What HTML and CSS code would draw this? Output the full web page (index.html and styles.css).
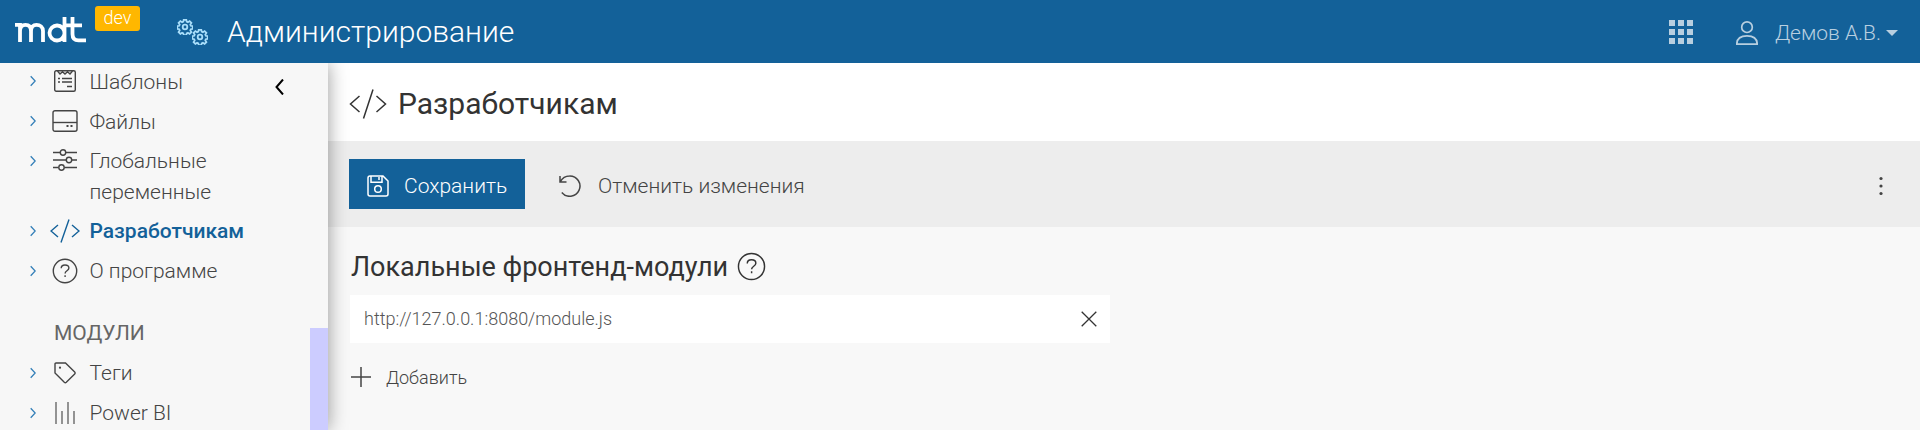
FILE: index.html
```html
<!DOCTYPE html>
<html lang="ru">
<head>
<meta charset="utf-8">
<title>Администрирование</title>
<link rel="stylesheet" href="styles.css">
</head>
<body>
<svg class="defs" width="0" height="0">
  <symbol id="chevron" viewBox="0 0 6 12"><path d="M.7 1.2 5.2 6 .7 10.8"/></symbol>
  <symbol id="code" viewBox="0 0 30 24"><path d="M8 6 1 12l7 6M22 6l7 6-7 6M19 .5 11 23.5"/></symbol>
  <symbol id="help" viewBox="0 0 26 26"><circle cx="13" cy="13" r="11.7"/><path d="M9.2 10.2C9.2 8 10.8 7 13 7s3.9 1.200 3.900 3.100c0 2.700-3.800 2.700-3.800 5.400M13.100 17.300v1.700"/></symbol>
  <symbol id="gear" viewBox="0 0 16 16"><path d="M6.700.8h2.600l.4 1.900 1.200.5 1.700-1.100 1.800 1.800-1.100 1.700.5 1.200 1.900.4v2.600l-1.900.4-.5 1.200 1.100 1.700-1.800 1.800-1.700-1.100-1.200.5-.4 1.900H6.700l-.4-1.900-1.200-.5-1.700 1.100-1.800-1.800 1.100-1.700-.5-1.200-1.900-.4V7.200l1.900-.4.5-1.200-1.100-1.700 1.800-1.800 1.700 1.100 1.200-.5z"/><circle cx="8" cy="8" r="2.300"/></symbol>
</svg>
<header class="topbar">
  <svg class="logo" viewBox="0 0 72 26" role="img" aria-label="mdt"><path d="M0 7.800H5V25M5 25V14c0-4 2-6.200 5.500-6.200S16 10 16 14v11M16 14c0-4 2-6.200 5.500-6.200S28 10 28 14v11M49.500 0v25M49.500 16.400a7.500 7.500 0 1 0-7.500 7.100 7.500 7.500 0 0 0 7.500-7.100M57.500 0v17c0 4.500 2.300 6.400 6 6.400H71M50 8.300h17"/></svg>
  <span class="badge">dev</span>
  <span class="gears"><svg class="gear gear-a"><use href="#gear"/></svg><svg class="gear gear-b"><use href="#gear"/></svg></span>
  <h1 class="app-title">Администрирование</h1>
  <svg class="apps" viewBox="0 0 24 24"><path d="M0 0h6v6H0zM9 0h6v6H9zM18 0h6v6h-6zM0 9h6v6H0zM9 9h6v6H9zM18 9h6v6h-6zM0 18h6v6H0zM9 18h6v6H9zM18 18h6v6h-6z"/></svg>
  <svg class="user" viewBox="0 0 22 24"><circle cx="11" cy="6.200" r="5.300"/><path d="M.8 23.200C.8 18 4.500 14.800 11 14.800S21.200 18 21.200 23.200z"/></svg>
  <span class="user-name">Демов А.В.</span>
  <svg class="caret" viewBox="0 0 12 6"><path d="M0 0h12L6 6z"/></svg>
</header>
<div class="layout">
  <nav class="sidebar">
    <svg class="collapse" viewBox="0 0 9 16"><path d="M8 .5 1.500 8 8 15.500"/></svg>
    <div class="item upper"><svg class="chev"><use href="#chevron"/></svg><span class="ico"><svg width="22" height="22" viewBox="0 0 22 22"><rect x=".7" y=".7" width="20.600" height="20.600" rx="1.500"/><path d="m3.500 1 2.500 3 2.500-2.300L11 4l2.500-2.300L16 4l2.500-3M4 8.500h2M8 8.500h10M4 12h2M8 12h10M13 16.500h5"/></svg></span><span class="label">Шаблоны</span></div>
    <div class="item upper"><svg class="chev"><use href="#chevron"/></svg><span class="ico"><svg width="26" height="22" viewBox="0 0 26 22"><rect x="1" y=".7" width="24" height="20.600" rx="2"/><path d="M1 12.500h24"/><path class="thick" d="M14.500 16h2M18.500 16h2"/></svg></span><span class="label">Файлы</span></div>
    <div class="item two-line"><svg class="chev"><use href="#chevron"/></svg><span class="ico"><svg width="24" height="22" viewBox="0 0 24 22"><path d="M0 3.500h7M13 3.500h11M0 11h13M19 11h5M0 18.500h5.500M11.500 18.500H24"/><circle cx="10" cy="3.500" r="2.700"/><circle cx="16" cy="11" r="2.700"/><circle cx="8.500" cy="18.500" r="2.700"/></svg></span><span class="label">Глобальные<br>переменные</span></div>
    <div class="item active"><svg class="chev"><use href="#chevron"/></svg><span class="ico"><svg width="30" height="24"><use href="#code"/></svg></span><span class="label">Разработчикам</span></div>
    <div class="item"><svg class="chev"><use href="#chevron"/></svg><span class="ico"><svg width="26" height="26"><use href="#help"/></svg></span><span class="label">О программе</span></div>
    <div class="group">МОДУЛИ</div>
    <div class="item"><svg class="chev"><use href="#chevron"/></svg><span class="ico"><svg width="22" height="22" viewBox="0 0 22 22"><path d="M1 2v9l9.300 9.300a1.500 1.500 0 0 0 2 0l8.400-8.400a1.400 1.400 0 0 0 0-2L11.500 1H2a1 1 0 0 0-1 1z"/><circle class="dot" cx="6" cy="5.700" r="1.100"/></svg></span><span class="label">Теги</span></div>
    <div class="item"><svg class="chev"><use href="#chevron"/></svg><span class="ico"><svg class="bars" width="22" height="22" viewBox="0 0 22 22"><path d="M2 0v22M8 9v13M14 0v22M20 9v13"/></svg></span><span class="label">Power BI</span></div>
    <div class="scroll-thumb"></div>
  </nav>
  <main class="main">
    <div class="page-head"><svg class="head-code" viewBox="0 0 38 30"><path d="M10.500 7 1.500 15l9 8M27.500 7l9 8-9 8M24 .5 14.500 29.500"/></svg><h2 class="page-title">Разработчикам</h2></div>
    <div class="toolbar">
      <button class="save"><svg width="22" height="22" viewBox="0 0 22 22"><path d="M3 1h13l5 5v13a2 2 0 0 1-2 2H3a2 2 0 0 1-2-2V3a2 2 0 0 1 2-2zM4 1v6.300h11V1M12 2v3"/><circle cx="11" cy="14" r="3.300"/></svg><span class="save-text">Сохранить</span></button>
      <button class="undo"><svg width="22" height="22" viewBox="0 0 22 22"><path d="M1 1v6h6.500M1.300 6.700C3.200 3.200 6.500.9 10.500.9a10.200 10.200 0 1 1-7.700 16.600"/></svg><span class="undo-text">Отменить изменения</span></button>
      <svg class="more" viewBox="0 0 4 20"><circle cx="2" cy="2.500" r="1.600"/><circle cx="2" cy="10" r="1.600"/><circle cx="2" cy="17.500" r="1.600"/></svg>
    </div>
    <section class="content">
      <div class="section-head"><h3 class="section-title">Локальные фронтенд-модули</h3><svg class="help" viewBox="0 0 26 26"><use href="#help"/></svg></div>
      <div class="field"><span class="url">http://127.0.0.1:8080/module.js</span><svg class="clear" viewBox="0 0 16 16"><path d="m.7.7 14.600 14.600M15.300.7.7 15.300"/></svg></div>
      <div class="add"><svg width="20" height="20" viewBox="0 0 20 20"><path d="M10 0v20M0 10h20"/></svg><span class="add-text">Добавить</span></div>
    </section>
  </main>
</div>
</body>
</html>
```
FILE: styles.css
```css
* { box-sizing: border-box; }
body { margin: 0; width: 1920px; height: 430px; overflow: hidden; font-family: Roboto, "Noto Sans", sans-serif; font-weight: 300; color: #333; background: #f8f8f8; }
svg { display: block; flex: none; fill: none; stroke: currentColor; }
.defs { position: absolute; }
h1, h2, h3 { margin: 0; white-space: nowrap; }
.topbar { display: flex; align-items: center; height: 63px; padding: 0 22px 0 15px; background: #136199; color: #fff; }
.logo { width: 72px; height: 26px; margin-bottom: 4px; stroke-width: 3.800; }
.badge { align-self: flex-start; width: 45px; height: 25px; margin: 6px 0 0 8px; border-radius: 3px; background: #ffb700; font-size: 18px; line-height: 23px; text-align: center; }
.gears { display: flex; width: 32px; height: 26px; margin: 1px 0 0 37px; color: #a9defa; }
.gear { width: 16px; height: 16px; stroke-width: 1.800; overflow: visible; }
.gear-b { align-self: flex-end; margin-left: -1px; }
.app-title { margin-left: 18px; font-size: 30px; font-weight: 300; line-height: 40px; }
.apps { width: 24px; height: 24px; margin-left: auto; margin-bottom: -1px; fill: #b8cfe0; stroke: none; }
.user { width: 22px; height: 24px; margin: 3px 0 0 43px; color: #b8cfe0; stroke-width: 1.700; }
.user-name { margin: 2px 0 0 17px; font-size: 21px; color: #b8cfe0; white-space: nowrap; }
.caret { width: 12px; height: 6px; margin: 3px 0 0 5px; fill: #b8cfe0; stroke: none; }
.layout { display: flex; height: 367px; }
.sidebar { position: relative; z-index: 1; flex: none; width: 328px; height: 367px; padding-left: 30px; background: #f7f7f7; box-shadow: 0 0 18px rgba(0, 0, 0, .4); clip-path: inset(0 -30px 0 0); }
.collapse { position: absolute; left: 275px; top: 16px; width: 9px; height: 16px; color: #000; stroke-width: 2; }
.item { display: flex; height: 40px; font-size: 21px; line-height: 31px; color: #444; }
.two-line { height: 70px; }
.chev { width: 6px; height: 12px; margin-top: 12px; color: #337fb8; stroke-width: 1.300; }
.ico { display: flex; align-items: center; justify-content: center; width: 31px; height: 36px; margin-left: 13px; }
.two-line .ico { height: 34px; }
.ico svg { stroke-width: 1.400; }
.ico .thick { stroke-width: 2; }
.ico .dot { fill: currentColor; stroke: none; }
.ico .bars { stroke-width: 1.800; color: #888; }
.label { margin: 3px 0 0 9.5px; white-space: nowrap; }
.upper .label { margin-top: 4px; }
.active { color: #136199; }
.active .label { font-weight: 500; }
.group { height: 62px; padding: 25px 0 0 24px; font-size: 21px; font-weight: 400; line-height: 31px; color: #666; }
.scroll-thumb { position: absolute; right: 0; top: 265px; width: 18px; height: 102px; background: #ccccff; }
.main { flex: 1; min-width: 0; }
.page-head { display: flex; align-items: center; height: 78px; padding-left: 20px; background: #fff; }
.head-code { width: 38px; height: 30px; margin: 3px 0 0 1px; stroke-width: 1.500; }
.page-title { margin: 3px 0 0 11px; font-size: 30px; font-weight: 400; line-height: 40px; }
.toolbar { display: flex; align-items: center; height: 86px; padding: 0 37.5px 0 21px; background: #ededed; }
button { display: flex; align-items: center; height: 50px; margin: 0; border: 0; background: none; font: inherit; font-size: 21px; color: #444; white-space: nowrap; }
.save { width: 176px; padding: 4px 0 0 18px; background: #136199; color: #fff; }
.save svg, .undo svg { stroke-width: 1.500; }
.save-text { margin-left: 15px; }
.undo { margin-left: 34px; padding: 4px 0 0; }
.undo-text { margin-left: 17px; }
.more { width: 4px; height: 20px; margin: 4px 0 0 auto; fill: #444; stroke: none; }
.content { padding: 19px 0 0 22px; }
.section-head { display: flex; align-items: center; height: 40px; }
.section-title { margin: 2px 0 0 1px; font-size: 27px; font-weight: 400; }
.help { width: 29px; height: 29px; margin-left: 9px; stroke-width: 1.300; }
.field { display: flex; align-items: center; justify-content: space-between; width: 760px; height: 48px; margin-top: 9px; padding: 0 13px 0 14px; background: #fff; font-size: 18px; color: #555; }
.url { margin-bottom: 1px; }
.clear { width: 16px; height: 16px; margin-bottom: 1px; color: #333; stroke-width: 1.300; }
.add { display: flex; align-items: center; height: 40px; margin-top: 14px; padding-left: 1px; font-size: 18px; color: #444; }
.add-text { margin-left: 15px; }
.add svg { stroke-width: 1.500; }
```
